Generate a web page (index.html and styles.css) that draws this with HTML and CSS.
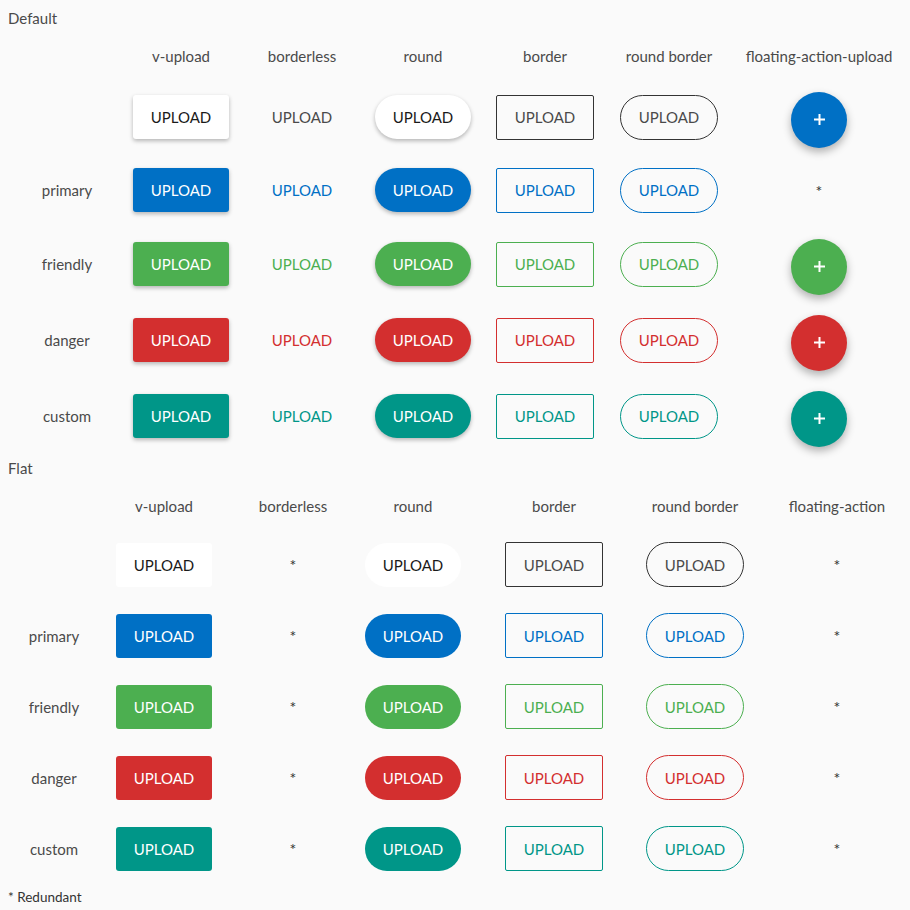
FILE: index.html
```html
<!DOCTYPE html>
<html lang="en">
<head>
<meta charset="utf-8">
<title>Upload buttons</title>
<link rel="stylesheet" href="styles.css">
</head>
<body>
<h2 class="section-title">Default</h2>
<table class="matrix matrix--default">
  <colgroup>
    <col class="c-label"><col class="c-v"><col class="c-bl"><col class="c-round"><col class="c-border"><col class="c-rborder"><col class="c-fab">
  </colgroup>
  <thead>
    <tr class="head-row"><th></th><th>v-upload</th><th>borderless</th><th>round</th><th>border</th><th>round border</th><th class="fab-col">floating-action-upload</th></tr>
  </thead>
  <tbody>
    <tr class="row-a">
      <td></td>
      <td><button class="btn btn--filled btn--shadow">UPLOAD</button></td>
      <td><button class="btn btn--ghost">UPLOAD</button></td>
      <td><button class="btn btn--filled btn--shadow btn--round">UPLOAD</button></td>
      <td><button class="btn btn--outline">UPLOAD</button></td>
      <td><button class="btn btn--outline btn--round">UPLOAD</button></td>
      <td class="fab-col"><button class="fab is-primary"><svg width="11" height="11" viewBox="0 0 11 11"><path d="M5.5 0v11M0 5.5h11" stroke="#fff" stroke-width="2"/></svg></button></td>
    </tr>
    <tr class="row-b">
      <td class="label">primary</td>
      <td><button class="btn btn--filled btn--shadow is-primary">UPLOAD</button></td>
      <td><button class="btn btn--ghost is-primary">UPLOAD</button></td>
      <td><button class="btn btn--filled btn--shadow btn--round is-primary">UPLOAD</button></td>
      <td><button class="btn btn--outline is-primary">UPLOAD</button></td>
      <td><button class="btn btn--outline btn--round is-primary">UPLOAD</button></td>
      <td class="star fab-col">*</td>
    </tr>
    <tr class="row-c">
      <td class="label">friendly</td>
      <td><button class="btn btn--filled btn--shadow is-friendly">UPLOAD</button></td>
      <td><button class="btn btn--ghost is-friendly">UPLOAD</button></td>
      <td><button class="btn btn--filled btn--shadow btn--round is-friendly">UPLOAD</button></td>
      <td><button class="btn btn--outline is-friendly">UPLOAD</button></td>
      <td><button class="btn btn--outline btn--round is-friendly">UPLOAD</button></td>
      <td class="fab-col"><button class="fab is-friendly"><svg width="11" height="11" viewBox="0 0 11 11"><path d="M5.5 0v11M0 5.5h11" stroke="#fff" stroke-width="2"/></svg></button></td>
    </tr>
    <tr class="row-c">
      <td class="label">danger</td>
      <td><button class="btn btn--filled btn--shadow is-danger">UPLOAD</button></td>
      <td><button class="btn btn--ghost is-danger">UPLOAD</button></td>
      <td><button class="btn btn--filled btn--shadow btn--round is-danger">UPLOAD</button></td>
      <td><button class="btn btn--outline is-danger">UPLOAD</button></td>
      <td><button class="btn btn--outline btn--round is-danger">UPLOAD</button></td>
      <td class="fab-col"><button class="fab is-danger"><svg width="11" height="11" viewBox="0 0 11 11"><path d="M5.5 0v11M0 5.5h11" stroke="#fff" stroke-width="2"/></svg></button></td>
    </tr>
    <tr class="row-c">
      <td class="label">custom</td>
      <td><button class="btn btn--filled btn--shadow is-custom">UPLOAD</button></td>
      <td><button class="btn btn--ghost is-custom">UPLOAD</button></td>
      <td><button class="btn btn--filled btn--shadow btn--round is-custom">UPLOAD</button></td>
      <td><button class="btn btn--outline is-custom">UPLOAD</button></td>
      <td><button class="btn btn--outline btn--round is-custom">UPLOAD</button></td>
      <td class="fab-col"><button class="fab is-custom"><svg width="11" height="11" viewBox="0 0 11 11"><path d="M5.5 0v11M0 5.5h11" stroke="#fff" stroke-width="2"/></svg></button></td>
    </tr>
  </tbody>
</table>

<h2 class="section-title section-title--flat">Flat</h2>
<table class="matrix matrix--flat">
  <colgroup>
    <col class="f-label"><col class="f-v"><col class="f-bl"><col class="f-round"><col class="f-border"><col class="f-rborder"><col class="f-fab">
  </colgroup>
  <thead>
    <tr class="head-row head-row--flat"><th></th><th>v-upload</th><th>borderless</th><th>round</th><th>border</th><th>round border</th><th class="fab-col">floating-action</th></tr>
  </thead>
  <tbody>
    <tr class="row-f">
      <td></td>
      <td><button class="btn btn--filled">UPLOAD</button></td>
      <td class="star">*</td>
      <td><button class="btn btn--filled btn--round">UPLOAD</button></td>
      <td><button class="btn btn--outline">UPLOAD</button></td>
      <td><button class="btn btn--outline btn--round">UPLOAD</button></td>
      <td class="star fab-col">*</td>
    </tr>
    <tr class="row-f">
      <td class="label">primary</td>
      <td><button class="btn btn--filled is-primary">UPLOAD</button></td>
      <td class="star">*</td>
      <td><button class="btn btn--filled btn--round is-primary">UPLOAD</button></td>
      <td><button class="btn btn--outline is-primary">UPLOAD</button></td>
      <td><button class="btn btn--outline btn--round is-primary">UPLOAD</button></td>
      <td class="star fab-col">*</td>
    </tr>
    <tr class="row-f">
      <td class="label">friendly</td>
      <td><button class="btn btn--filled is-friendly">UPLOAD</button></td>
      <td class="star">*</td>
      <td><button class="btn btn--filled btn--round is-friendly">UPLOAD</button></td>
      <td><button class="btn btn--outline is-friendly">UPLOAD</button></td>
      <td><button class="btn btn--outline btn--round is-friendly">UPLOAD</button></td>
      <td class="star fab-col">*</td>
    </tr>
    <tr class="row-f">
      <td class="label">danger</td>
      <td><button class="btn btn--filled is-danger">UPLOAD</button></td>
      <td class="star">*</td>
      <td><button class="btn btn--filled btn--round is-danger">UPLOAD</button></td>
      <td><button class="btn btn--outline is-danger">UPLOAD</button></td>
      <td><button class="btn btn--outline btn--round is-danger">UPLOAD</button></td>
      <td class="star fab-col">*</td>
    </tr>
    <tr class="row-f">
      <td class="label">custom</td>
      <td><button class="btn btn--filled is-custom">UPLOAD</button></td>
      <td class="star">*</td>
      <td><button class="btn btn--filled btn--round is-custom">UPLOAD</button></td>
      <td><button class="btn btn--outline is-custom">UPLOAD</button></td>
      <td><button class="btn btn--outline btn--round is-custom">UPLOAD</button></td>
      <td class="star fab-col">*</td>
    </tr>
  </tbody>
</table>
<p class="footnote">* Redundant</p>
</body>
</html>
```

FILE: styles.css
```css
html { background: #fafafa; }
body {
  margin: 8px;
  background: #fafafa;
  font-family: Lato, "Open Sans", sans-serif;
  font-size: 15px;
  color: #4a4a4a;
}
.section-title {
  margin: 0;
  font-size: 15px;
  font-weight: 400;
  line-height: 20px;
}
.section-title--flat { margin-top: 4px; }

.matrix {
  table-layout: fixed;
  border-collapse: collapse;
  border-spacing: 0;
  width: 900px;
}
.matrix th, .matrix td {
  padding: 0;
  text-align: center;
  vertical-align: middle;
  font-weight: 400;
}
.c-label { width: 118px; }
.c-v { width: 110px; }
.c-bl { width: 132px; }
.c-round { width: 110px; }
.c-border { width: 134px; }
.c-rborder { width: 114px; }
.c-fab { width: 182px; }
.matrix--default .fab-col { padding-left: 4px; }

.f-label { width: 92px; }
.f-v { width: 128px; }
.f-bl { width: 130px; }
.f-round { width: 110px; }
.f-border { width: 172px; }
.f-rborder { width: 110px; }
.f-fab { width: 158px; }
.matrix--flat .fab-col { padding-left: 16px; }

.head-row { height: 52px; }
.head-row th { padding-top: 4px; }
.head-row--flat { height: 51px; }
.head-row--flat th { padding-top: 5px; }
.row-a { height: 74px; }
.row-b { height: 72px; }
.row-c { height: 76px; }
.row-f { height: 71px; }

.label { color: #4a4a4a; }
.star { color: #333; font-size: 16px; }

.btn {
  display: inline-flex;
  align-items: center;
  justify-content: center;
  box-sizing: border-box;
  width: 96px;
  height: 44px;
  padding: 0;
  margin: 0;
  border: 0;
  border-radius: 3px;
  background: #fff;
  color: #1a1a1a;
  font-family: inherit;
  font-size: 15px;
  vertical-align: middle;
}
.btn--shadow { box-shadow: 0 2px 4px rgba(0, 0, 0, 0.28); }
.btn--round { border-radius: 23px; }
.btn--ghost { background: transparent; color: #4a4a4a; }
.btn--outline {
  width: 98px;
  height: 45px;
  background: transparent;
  color: #4a4a4a;
  border: 1px solid #333;
  border-radius: 2px;
}
.btn--outline.btn--round { border-radius: 23px; }

.btn--filled.is-primary { background: #0070c5; color: #fff; }
.btn--filled.is-friendly { background: #4caf50; color: #fff; }
.btn--filled.is-danger { background: #d32f2f; color: #fff; }
.btn--filled.is-custom { background: #009688; color: #fff; }

.btn--ghost.is-primary, .btn--outline.is-primary { color: #0070c5; border-color: #0070c5; }
.btn--ghost.is-friendly, .btn--outline.is-friendly { color: #4caf50; border-color: #4caf50; }
.btn--ghost.is-danger, .btn--outline.is-danger { color: #d32f2f; border-color: #d32f2f; }
.btn--ghost.is-custom, .btn--outline.is-custom { color: #009688; border-color: #009688; }

.fab {
  display: inline-flex;
  align-items: center;
  justify-content: center;
  width: 56px;
  height: 56px;
  margin-top: 5px;
  padding: 0;
  border: 0;
  border-radius: 50%;
  box-shadow: 0 4px 9px rgba(0, 0, 0, 0.3);
  vertical-align: middle;
}
.fab.is-primary { background: #0070c5; }
.fab.is-friendly { background: #4caf50; }
.fab.is-danger { background: #d32f2f; }
.fab.is-custom { background: #009688; }

.footnote {
  margin: 4px 0 0;
  font-size: 13.5px;
  line-height: 18px;
  color: #333;
}
```
